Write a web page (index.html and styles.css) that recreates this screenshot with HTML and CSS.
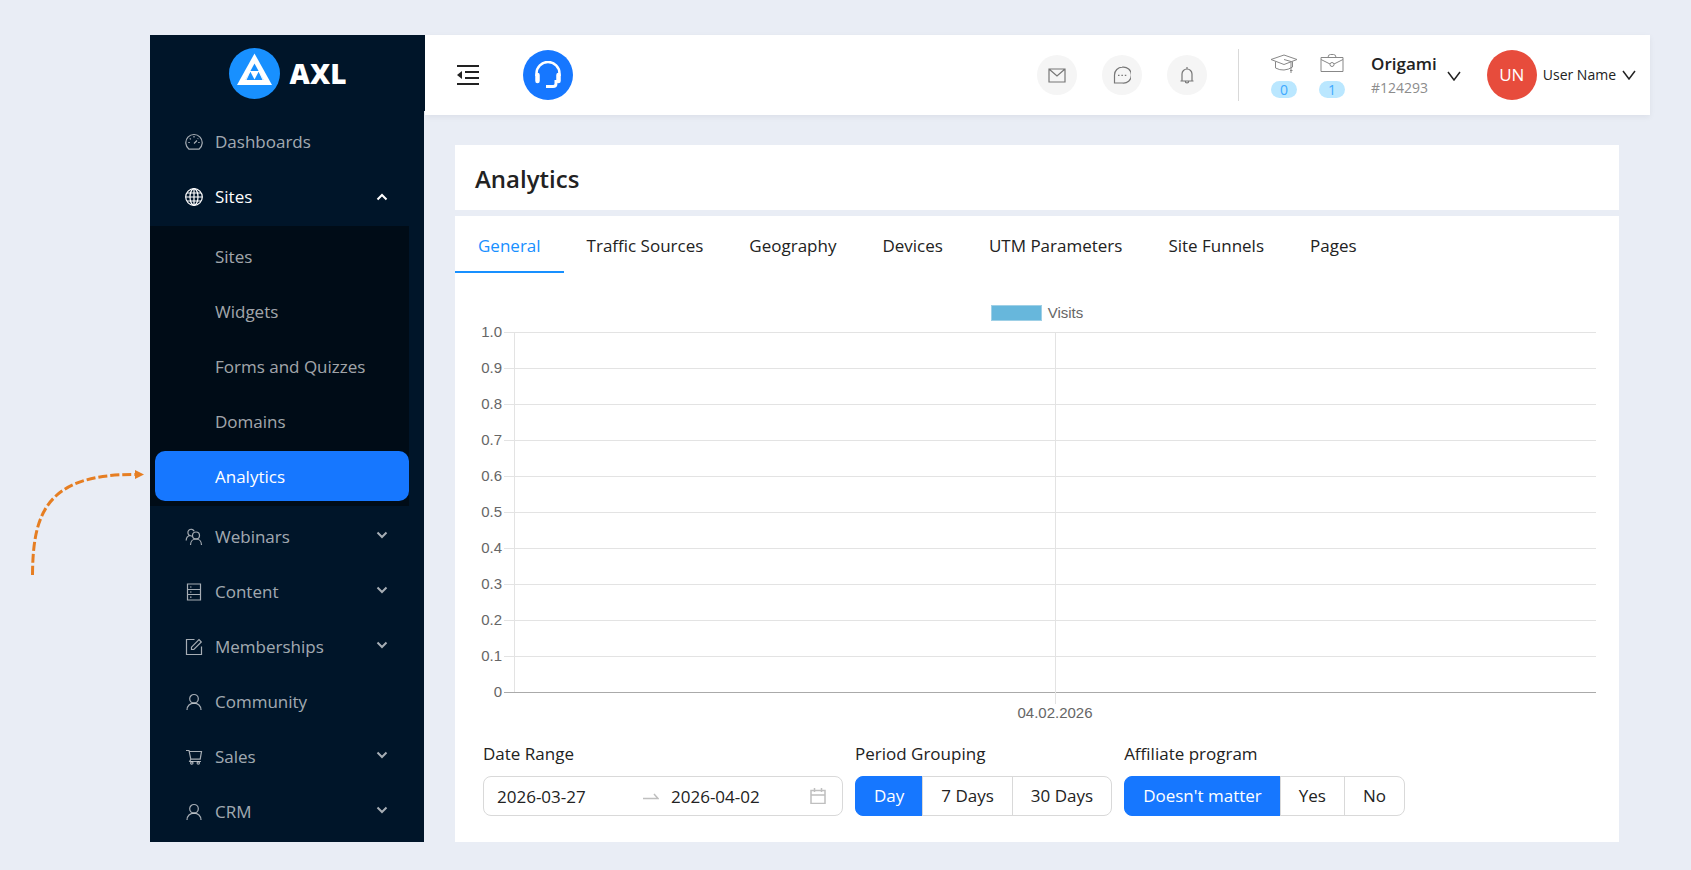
FILE: index.html
```html
<!DOCTYPE html>
<html lang="en">
<head>
  <meta charset="UTF-8" />
  <meta name="viewport" content="width=device-width, initial-scale=1" />
  <title>Analytics</title>
  <link rel="stylesheet" href="styles.css">
</head>
<body>
  <!-- Pointer to the active menu item -->
  <svg class="pointer" width="120" height="110" viewBox="0 0 120 110" aria-hidden="true">
    <path d="M7.500 105C8 45 20 4 110 4.500" fill="none" stroke="#e67e22" stroke-width="3" stroke-dasharray="9 3"/>
    <path d="M110 0l9 4.500-9 4.500z" fill="#e67e22"/>
  </svg>

  <div class="app">
    <aside class="sidebar">
      <a class="logo" href="#">
        <svg width="51" height="51" viewBox="0 0 51 51" aria-hidden="true">
          <circle cx="25.500" cy="25.500" r="25.500" fill="#1890ff"/>
          <path d="M25.500 5.500L43 37H8z" fill="#fff"/>
          <path d="M25.500 15.500L34.500 32h-18z" fill="#1890ff"/>
          <path d="M21 23.500h9M17 32l4-8.500M34 32l-4-8.500" stroke="#fff" fill="none"/>
          <path d="M21.500 24h8l-4 7.500z" fill="#fff"/>
        </svg>
        <span>AXL</span>
      </a>

      <nav class="menu">
        <a class="menu-item" href="#">
          <svg class="icon" viewBox="0 0 18 18"><path d="M4 16.200a8.200 8.200 0 1 1 10 0z"/><path d="M9 10.500l3-3M9 3v1.500M3.300 9.500h1.500M13.200 9.500h1.500M4.800 5.300l1 1M13.200 5.300l-.5.500"/></svg>
          <span>Dashboards</span>
        </a>
        <button class="menu-item open" type="button">
          <svg class="icon" viewBox="0 0 18 18"><circle cx="9" cy="9" r="8.300"/><ellipse cx="9" cy="9" rx="4" ry="8.300"/><path d="M9 .700v16.600M.700 9h16.600M2 5h14M2 13h14"/></svg>
          <span>Sites</span>
          <svg class="caret" viewBox="0 0 12 8"><path d="M1.500 6.500L6 2l4.500 4.500"/></svg>
        </button>
        <div class="submenu">
          <a class="submenu-item" href="#">Sites</a>
          <a class="submenu-item" href="#">Widgets</a>
          <a class="submenu-item" href="#">Forms and Quizzes</a>
          <a class="submenu-item" href="#">Domains</a>
          <a class="submenu-item active" href="#">Analytics</a>
        </div>
        <button class="menu-item" type="button">
          <svg class="icon" viewBox="0 0 18 18"><circle cx="11" cy="7.500" r="3.500"/><path d="M5.500 17c0-3.500 2.300-6 5.500-6s5.500 2.500 5.500 6M9.200 3.200A3.300 3.300 0 1 0 4.700 7.500M1.200 12.500c0-2.700 1.500-4.500 3.800-5l2 .700"/></svg>
          <span>Webinars</span>
          <svg class="caret" viewBox="0 0 12 8"><path d="M1.500 1.500L6 6l4.500-4.500"/></svg>
        </button>
        <button class="menu-item" type="button">
          <svg class="icon" viewBox="0 0 18 18"><path d="M2.500 1h13v16h-13zM2.500 6.500h13M2.500 11.500h13M5 4h1.500M5 9h1.500M5 14.200h1.500"/></svg>
          <span>Content</span>
          <svg class="caret" viewBox="0 0 12 8"><path d="M1.500 1.500L6 6l4.500-4.500"/></svg>
        </button>
        <button class="menu-item" type="button">
          <svg class="icon" viewBox="0 0 18 18"><path d="M9.500 1.500h-8v15h15v-8"/><path d="M6.500 11.500V9.200L14 1.700l2.300 2.300-7.500 7.500z"/></svg>
          <span>Memberships</span>
          <svg class="caret" viewBox="0 0 12 8"><path d="M1.500 1.500L6 6l4.500-4.500"/></svg>
        </button>
        <a class="menu-item" href="#">
          <svg class="icon" viewBox="0 0 18 18"><circle cx="9" cy="5.800" r="4.300"/><path d="M2 17c0-4 3-6.900 7-6.900s7 2.900 7 6.900"/></svg>
          <span>Community</span>
        </a>
        <button class="menu-item" type="button">
          <svg class="icon" viewBox="0 0 18 18"><path d="M1 2.500h3l1.800 8.700h9.400l1.300-7.700H4.500M5.800 11.200L4.700 13.500H16"/><circle cx="6.800" cy="15" r="1.200"/><circle cx="13.300" cy="15" r="1.200"/></svg>
          <span>Sales</span>
          <svg class="caret" viewBox="0 0 12 8"><path d="M1.500 1.500L6 6l4.500-4.500"/></svg>
        </button>
        <button class="menu-item" type="button">
          <svg class="icon" viewBox="0 0 18 18"><circle cx="9" cy="5.800" r="4.300"/><path d="M2 17c0-4 3-6.900 7-6.900s7 2.900 7 6.900"/></svg>
          <span>CRM</span>
          <svg class="caret" viewBox="0 0 12 8"><path d="M1.500 1.500L6 6l4.500-4.500"/></svg>
        </button>
      </nav>
    </aside>

    <div class="main">
      <header class="topbar">
        <button class="fold" type="button" aria-label="Collapse menu">
          <svg width="24" height="22" viewBox="0 0 24 22"><path d="M1 2h22M9 8h14M9 14h14M1 20h22" stroke="#222" stroke-width="2"/><path d="M6 7v8l-5-4z" fill="#222"/></svg>
        </button>
        <button class="support" type="button" aria-label="Support">
          <svg width="28" height="28" viewBox="0 0 28 28" fill="none" stroke="#fff"><path d="M2.500 15v-2.500a11.500 11.500 0 0 1 23 0V15" stroke-width="2.500"/><path d="M3.500 14v6M24.500 14v6" stroke-width="4.500" stroke-linecap="round"/><path d="M22 19v3.500q0 3-3 3h-7" stroke-width="3"/></svg>
        </button>

        <div class="notices">
          <button class="round" type="button" aria-label="Mail">
            <svg class="icon" viewBox="0 0 18 18"><path d="M1 3h16v13H1zM1 3l8 7 8-7"/></svg>
          </button>
          <button class="round" type="button" aria-label="Messages">
            <svg class="icon" viewBox="0 0 18 18"><path d="M9.200 1.200a8 8 0 1 1 0 15.800H1.500V9a7.800 7.800 0 0 1 7.700-7.800z"/><path d="M5 9.300h1.500M8.400 9.300h1.500M11.800 9.300h1.500"/></svg>
          </button>
          <button class="round" type="button" aria-label="Notifications">
            <svg class="icon" viewBox="0 0 18 18"><path d="M4 15V8a5 5 0 0 1 10 0v7M2.500 15h13M9 1v2M7.300 15.300a1.700 1.700 0 0 0 3.400 0"/></svg>
          </button>
        </div>

        <div class="counters">
          <a class="counter" href="#">
            <svg width="28" height="20" viewBox="0 0 28 20"><path d="M1 5.500L14 1l13 4.500-13 5zM5.500 7.500V14q8.500 4.500 17-1V7.500M14 5.500l7 2V19M20 16.500h2.500"/></svg>
            <span class="badge">0</span>
          </a>
          <a class="counter" href="#">
            <svg width="24" height="20" viewBox="0 0 24 20"><path d="M1 3.500h22v14H1zM8 3.500q0-3 2.500-3h3q2.500 0 2.500 3M1 5.500l9 4.500M23 5.500L14 10"/><circle cx="12" cy="10.500" r="2"/></svg>
            <span class="badge">1</span>
          </a>
        </div>

        <button class="project" type="button">
          <span class="project-text">
            <strong>Origami</strong>
            <small>#124293</small>
          </span>
          <svg class="arrow" viewBox="0 0 14 10"><path d="M1 1l6 8 6-8"/></svg>
        </button>

        <button class="user" type="button">
          <span class="avatar">UN</span>
          <span>User Name</span>
          <svg class="arrow" viewBox="0 0 14 10"><path d="M1 1l6 8 6-8"/></svg>
        </button>
      </header>

      <main class="content">
        <div class="card heading">
          <h1>Analytics</h1>
        </div>

        <section class="card">
          <nav class="tabs">
            <a class="tab active" href="#">General</a>
            <a class="tab" href="#">Traffic Sources</a>
            <a class="tab" href="#">Geography</a>
            <a class="tab" href="#">Devices</a>
            <a class="tab" href="#">UTM Parameters</a>
            <a class="tab" href="#">Site Funnels</a>
            <a class="tab" href="#">Pages</a>
          </nav>

          <!-- Chart -->
          <div class="legend"><i class="swatch"></i>Visits</div>
          <div class="chart">
            <div class="y-labels">
              <span>1.0</span>
              <span>0.9</span>
              <span>0.8</span>
              <span>0.7</span>
              <span>0.6</span>
              <span>0.5</span>
              <span>0.4</span>
              <span>0.3</span>
              <span>0.2</span>
              <span>0.1</span>
              <span>0</span>
            </div>
            <div class="plot">
              <svg class="grid" aria-hidden="true">
                <rect width="100%" height="1" y="9"/>
                <rect width="100%" height="1" y="45"/>
                <rect width="100%" height="1" y="81"/>
                <rect width="100%" height="1" y="117"/>
                <rect width="100%" height="1" y="153"/>
                <rect width="100%" height="1" y="189"/>
                <rect width="100%" height="1" y="225"/>
                <rect width="100%" height="1" y="261"/>
                <rect width="100%" height="1" y="297"/>
                <rect width="100%" height="1" y="333"/>
                <rect class="zero" width="100%" height="1" y="369"/>
                <rect width="1" height="360" x="10" y="9"/>
                <rect class="middle" width="1" height="372" y="9"/>
              </svg>
              <div class="x-label">04.02.2026</div>
            </div>
          </div>

          <!-- Filters -->
          <form class="filters">
            <div class="field">
              <label for="date-from">Date Range</label>
              <div class="range">
                <input type="text" id="date-from" value="2026-03-27">
                <svg class="to" width="16" height="16" viewBox="0 0 16 16"><path d="M0 10.500h15L11 6"/></svg>
                <input type="text" id="date-to" value="2026-04-02" aria-label="End date">
                <svg width="16" height="16" viewBox="0 0 16 16"><path d="M1 2.500h14v13H1zM1 7h14M4.500 0v4M11.500 0v4"/></svg>
              </div>
            </div>
            <fieldset class="field">
              <legend>Period Grouping</legend>
              <div class="segments">
                <label><input type="radio" name="period" checked><span>Day</span></label>
                <label><input type="radio" name="period"><span>7 Days</span></label>
                <label><input type="radio" name="period"><span>30 Days</span></label>
              </div>
            </fieldset>
            <fieldset class="field">
              <legend>Affiliate program</legend>
              <div class="segments">
                <label><input type="radio" name="affiliate" checked><span>Doesn't matter</span></label>
                <label><input type="radio" name="affiliate"><span>Yes</span></label>
                <label><input type="radio" name="affiliate"><span>No</span></label>
              </div>
            </fieldset>
          </form>
        </section>
      </main>
    </div>
  </div>
</body>
</html>
```
FILE: styles.css
```css
* {
  box-sizing: border-box;
}

body {
  margin: 0;
  background-color: #e9edf5;
  color: #222;
  font-family: 'Segoe UI', 'Open Sans', 'Noto Sans', sans-serif;
  font-size: 17px;
  line-height: 24px;
}

a {
  color: inherit;
  text-decoration: none;
}

button,
input {
  font: inherit;
  color: inherit;
  border: none;
  background: none;
  padding: 0;
}

button {
  cursor: pointer;
}

svg {
  display: block;
  flex: none;
}

.app {
  display: flex;
  padding: 35px 41px 28px 150px;
}

/* Arrow drawn over the page */
.pointer {
  position: absolute;
  left: 25px;
  top: 470px;
}

.icon {
  width: 18px;
  height: 18px;
  fill: none;
  stroke: currentColor;
  stroke-width: 1.2;
}

/* Sidebar */
.sidebar {
  flex: none;
  width: 275px;
}

.logo {
  display: flex;
  align-items: center;
  justify-content: center;
  gap: 10px;
  height: 76px;
  background-color: #001529;
  color: #fff;
  font-size: 28px;
  font-weight: 800;
}

.menu {
  margin-right: 1px;
  padding: 3px 0;
  background-color: #001529;
  color: rgba(255, 255, 255, 0.65);
}

.menu-item {
  display: flex;
  align-items: center;
  gap: 12px;
  width: 100%;
  height: 55px;
  padding: 0 36px 0 35px;
  text-align: left;
}

.menu-item.open {
  color: #fff;
}

.caret {
  width: 12px;
  height: 8px;
  margin: 0 0 4px auto;
  fill: none;
  stroke: currentColor;
  stroke-width: 2;
}

.open .caret {
  margin-bottom: 0;
}

.submenu {
  display: grid;
  gap: 5px;
  margin: 2px 15px 3px 0;
  padding: 5px 0 5px 5px;
  background-color: #000c17;
}

.submenu-item {
  padding: 14px 0 12px 60px;
  border-radius: 10px;
}

.submenu-item.active {
  background-color: #1677ff;
  color: #fff;
}

/* Top bar */
.main {
  flex: 1;
  min-width: 0;
}

.topbar {
  display: flex;
  align-items: center;
  height: 80px;
  padding: 0 14px 0 31px;
  background-color: #fff;
  box-shadow: 0 2px 6px rgba(0, 21, 41, 0.06);
}

.support {
  display: grid;
  place-items: center;
  width: 50px;
  height: 50px;
  margin-left: 43px;
  border-radius: 50%;
  background-color: #1677ff;
}

.notices {
  display: flex;
  gap: 25px;
  margin-left: auto;
}

.round {
  display: grid;
  place-items: center;
  width: 40px;
  height: 40px;
  border-radius: 50%;
  background-color: #f5f5f5;
  color: #777;
}

.counters {
  display: flex;
  gap: 20px;
  height: 52px;
  margin-left: 31px;
  padding: 5px 0 0 31px;
  border-left: 1px solid #d9d9d9;
}

.counter {
  display: grid;
  align-content: start;
  justify-items: center;
  gap: 7px;
  width: 28px;
}

.counter svg {
  fill: none;
  stroke: #888;
}

.badge {
  width: 26px;
  height: 17px;
  border-radius: 9px;
  background-color: #bae7ff;
  color: #40a9ff;
  font-size: 14px;
  line-height: 17px;
  text-align: center;
}

.project {
  display: flex;
  align-items: center;
  gap: 10px;
  margin-left: 25px;
  padding-top: 2px;
}

.project-text {
  display: grid;
  text-align: left;
}

.project strong {
  font-weight: 600;
}

.project small {
  color: #8c8c8c;
  font-size: 14px;
}

.arrow {
  width: 14px;
  height: 10px;
  fill: none;
  stroke: #222;
  stroke-width: 1.5;
}

.user {
  display: flex;
  align-items: center;
  gap: 6px;
  margin-left: 26px;
  font-size: 14px;
}

.avatar {
  width: 50px;
  height: 50px;
  border-radius: 50%;
  background-color: #e74c3c;
  color: #fff;
  font-size: 17px;
  line-height: 50px;
}

/* Content */
.content {
  display: grid;
  gap: 6px;
  padding: 30px 31px 0 30px;
}

.card {
  background-color: #fff;
}

.heading {
  padding: 19px 20px 16px;
}

h1 {
  margin: 0;
  font-size: 24px;
  font-weight: 600;
  line-height: 30px;
}

.tabs {
  display: flex;
}

.tab {
  padding: 18px 23px 13px;
  border-bottom: 2px solid transparent;
}

.tab.active {
  border-color: #1890ff;
  color: #1890ff;
}

/* Chart */
.legend,
.chart {
  color: #666;
  font-family: Arial, 'Liberation Sans', sans-serif;
  font-size: 15px;
}

.legend {
  display: flex;
  align-items: center;
  justify-content: center;
  gap: 6px;
  margin-top: 30px;
  line-height: 20px;
}

.swatch {
  width: 51px;
  height: 16px;
  border: 1px solid #9fd0e6;
  background-color: #67b7dc;
}

.chart {
  display: flex;
  align-items: flex-start;
  padding: 0 23px 0 19px;
}

.y-labels {
  display: grid;
  width: 28px;
  margin: -9px 0 -6px;
  line-height: 36px;
  text-align: right;
}

.plot {
  flex: 1;
  margin-left: 2px;
}

.grid {
  width: 100%;
  height: 381px;
  fill: #e3e3e3;
}

.grid .zero {
  fill: #aaa;
}

.grid .middle {
  x: calc(50% + 5px);
}

.x-label {
  padding-left: 10px;
  line-height: 18px;
  text-align: center;
}

/* Filters */
.filters {
  display: flex;
  gap: 12px;
  padding: 20px 28px 26px;
}

.field {
  margin: 0;
  padding: 0;
  border: none;
}

.field > label,
legend {
  display: block;
  margin-bottom: 10px;
  padding: 0;
}

.range {
  display: flex;
  align-items: center;
  width: 360px;
  height: 40px;
  padding: 0 16px 0 13px;
  border: 1px solid #d9d9d9;
  border-radius: 8px;
}

.range input {
  flex: 1;
  min-width: 0;
  padding-top: 2px;
}

.range svg {
  fill: none;
  stroke: #bfbfbf;
  stroke-width: 1.5;
}

.range .to {
  margin: 0 12px 0 7px;
}

.segments {
  display: flex;
}

.segments input {
  position: absolute;
  opacity: 0;
}

.segments span {
  display: block;
  margin-left: -1px;
  padding: 7px 18px;
  border: 1px solid #d9d9d9;
  cursor: pointer;
}

.segments label:first-child span {
  margin-left: 0;
  border-radius: 8px 0 0 8px;
}

.segments label:last-child span {
  border-radius: 0 8px 8px 0;
}

.segments input:checked + span {
  border-color: #1677ff;
  background-color: #1677ff;
  color: #fff;
}
```
